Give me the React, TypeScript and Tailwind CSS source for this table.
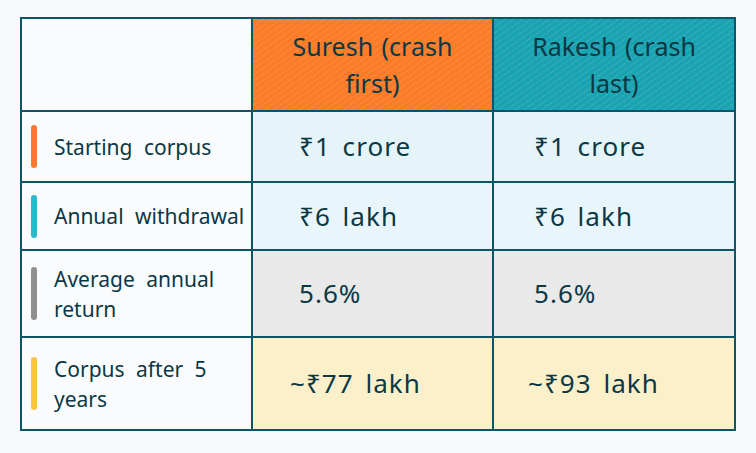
const rows = [
  {
    label: ['Starting corpus'],
    pill: 'bg-[#f97a2f] h-[43px]',
    cell: 'bg-[#e5f4f9]',
    a: '₹1 crore',
    b: '₹1 crore',
    padA: 'pl-[46px]',
    padB: 'pl-[40px]',
  },
  {
    label: ['Annual withdrawal'],
    pill: 'bg-[#2bb8cc] h-[43px]',
    cell: 'bg-[#e8f5fa]',
    a: '₹6 lakh',
    b: '₹6 lakh',
    padA: 'pl-[46px]',
    padB: 'pl-[40px]',
  },
  {
    label: ['Average annual', 'return'],
    pill: 'bg-[#8f8f8f] h-[53px]',
    cell: 'bg-[#e9e9e9]',
    a: '5.6%',
    b: '5.6%',
    padA: 'pl-[46px]',
    padB: 'pl-[40px]',
  },
  {
    label: ['Corpus after 5', 'years'],
    pill: 'bg-[#fbc447] h-[53px]',
    cell: 'bg-[#fcf0cb]',
    a: '~₹77 lakh',
    b: '~₹93 lakh',
    padA: 'pl-[37px]',
    padB: 'pl-[34px]',
  },
];

const hatch =
  'bg-[repeating-linear-gradient(-35deg,rgba(255,255,255,0.10)_0px,rgba(255,255,255,0.10)_1px,transparent_1px,transparent_5px)]';

export default function App() {
  return (
    <div className="w-full h-[453px] bg-[#f8f9fa] pt-[17px] pl-[20px] font-['Noto_Sans',sans-serif] text-[#0a3845]">
      <div className="w-[716px] grid grid-cols-[229px_239px_240px] grid-rows-[91px_69px_66px_85px_91px] gap-[2px] p-[2px] bg-[#0b5566]">
        <div className="bg-[#fafbfc]" />
        <div className={`bg-[#fb7b27] ${hatch} flex items-center justify-center text-center text-[25px] leading-[37px] [word-spacing:2px]`}>
          <div>
            Suresh (crash
            <br />
            first)
          </div>
        </div>
        <div className={`bg-[#1aa3b0] ${hatch} flex items-center justify-center text-center text-[25px] leading-[37px] [word-spacing:2px]`}>
          <div>
            Rakesh (crash
            <br />
            last)
          </div>
        </div>

        {rows.map((r) => (
          <>
            <div key={r.label[0]} className="bg-[#fafbfc] flex items-center pl-[9px] gap-[17px]">
              <span className={`w-[6px] rounded-full shrink-0 ${r.pill}`} />
              <div className="text-[21px] leading-[30px] [word-spacing:6px]">
                {r.label.map((l) => (
                  <div key={l}>{l}</div>
                ))}
              </div>
            </div>
            <div className={`${r.cell} flex items-center ${r.padA} text-[26px] tracking-[0.04em] [word-spacing:4px]`}>
              {r.a}
            </div>
            <div className={`${r.cell} flex items-center ${r.padB} text-[26px] tracking-[0.04em] [word-spacing:4px]`}>
              {r.b}
            </div>
          </>
        ))}
      </div>
    </div>
  );
}
